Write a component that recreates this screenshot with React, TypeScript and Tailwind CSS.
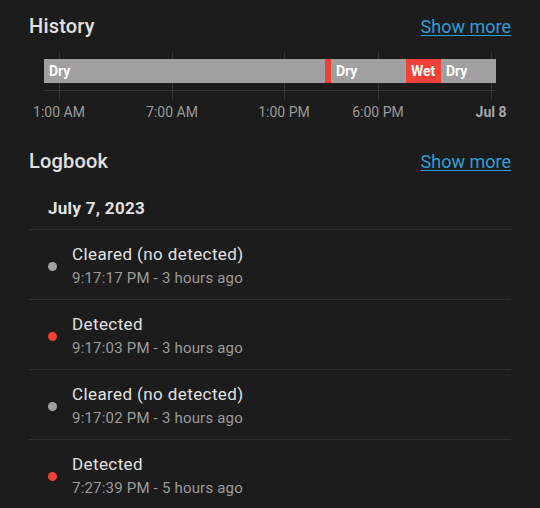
import React from "react";

const segments = [
  { w: 281, color: "bg-[#a0a0a0]", label: "Dry" },
  { w: 6, color: "bg-[#ef4136]", label: "" },
  { w: 75, color: "bg-[#a0a0a0]", label: "Dry" },
  { w: 35, color: "bg-[#ef4136]", label: "Wet" },
  { w: 55, color: "bg-[#a0a0a0]", label: "Dry" },
];

const ticks = [
  { x: 30, label: "1:00 AM", bold: false },
  { x: 143, label: "7:00 AM", bold: false },
  { x: 255, label: "1:00 PM", bold: false },
  { x: 349, label: "6:00 PM", bold: false },
  { x: 462, label: "Jul 8", bold: true },
];

const entries = [
  { title: "Cleared (no detected)", time: "9:17:17 PM - 3 hours ago", on: false },
  { title: "Detected", time: "9:17:03 PM - 3 hours ago", on: true },
  { title: "Cleared (no detected)", time: "9:17:02 PM - 3 hours ago", on: false },
  { title: "Detected", time: "7:27:39 PM - 5 hours ago", on: true },
];

const SectionHeader = ({ title }: { title: string }) => (
  <div className="flex h-[28px] items-baseline justify-between">
    <h2 className="text-[20px] leading-[28px] font-medium text-[#e1e1e1] tracking-[0.2px]">{title}</h2>
    <a className="text-[18px] leading-[28px] text-[#2a9fd8] underline underline-offset-2">Show more</a>
  </div>
);

export default function App() {
  return (
    <div
      className="h-[508px] w-[540px] overflow-hidden bg-[#1c1c1c] px-[29px] pt-[12px]"
      style={{ fontFamily: "Roboto, 'Liberation Sans', sans-serif" }}
    >
      <SectionHeader title="History" />

      {/* timeline chart */}
      <div className="relative h-[107px] pl-[15px] pt-[19px]">
        <svg className="absolute left-0 top-0" width="482" height="107">
          {ticks.map((t) => (
            <line key={t.x} x1={t.x + 0.5} x2={t.x + 0.5} y1="12" y2="60" stroke="#363636" strokeWidth="1" />
          ))}
          <line x1="15" x2="467" y1="50.5" y2="50.5" stroke="#363636" strokeWidth="1" />
        </svg>
        <div className="relative z-10 flex h-[24px] w-[452px]">
          {segments.map((s, i) => (
            <div key={i} className={`${s.color} flex h-full items-center overflow-hidden`} style={{ width: s.w }}>
              {s.label && (
                <span className="pl-[5px] text-[14px] font-bold text-white">{s.label}</span>
              )}
            </div>
          ))}
        </div>
        {ticks.map((t) => (
          <span
            key={t.label}
            className={`absolute top-[63px] -translate-x-1/2 whitespace-nowrap text-[14px] leading-[18px] ${
              t.bold ? "font-bold text-[#a8a8a8]" : "text-[#9a9a9a]"
            }`}
            style={{ left: t.x }}
          >
            {t.label}
          </span>
        ))}
      </div>

      <SectionHeader title="Logbook" />

      <div className="h-[55px] border-b border-[#2f2f2f] pl-[19px] pt-[21px]">
        <div className="text-[17px] font-bold leading-[24px] tracking-[0.3px] text-[#e1e1e1]">July 7, 2023</div>
      </div>

      {entries.map((e, i) => (
        <div key={i} className="flex h-[70px] items-center border-b border-[#2f2f2f] pl-[19px] pt-[3px]">
          <span className={`h-[9px] w-[9px] rounded-full ${e.on ? "bg-[#ef4136]" : "bg-[#a0a0a0]"}`} />
          <div className="ml-[15px] flex flex-col">
            <span className="text-[17px] leading-[24px] text-[#e1e1e1] tracking-[0.4px]">{e.title}</span>
            <span className="text-[15px] leading-[24px] text-[#9b9b9b] tracking-[0.2px]">{e.time}</span>
          </div>
        </div>
      ))}
    </div>
  );
}
